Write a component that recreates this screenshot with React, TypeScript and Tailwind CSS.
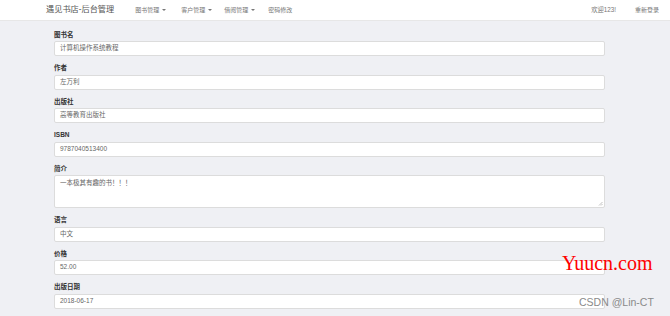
import React from "react";

interface Field {
  label: string;
  value: string;
  multiline?: boolean;
}

const fields: Field[] = [
  { label: "图书名", value: "计算机操作系统教程" },
  { label: "作者", value: "左万利" },
  { label: "出版社", value: "高等教育出版社" },
  { label: "ISBN", value: "9787040513400" },
  { label: "简介", value: "一本极其有趣的书！！！", multiline: true },
  { label: "语言", value: "中文" },
  { label: "价格", value: "52.00" },
  { label: "出版日期", value: "2018-06-17" },
];

const font = "font-['Liberation_Sans','Noto_Sans_CJK_SC',sans-serif]";

const Caret = () => (
  <span className="ml-[3px] inline-block h-0 w-0 border-x-[2px] border-t-[2px] border-x-transparent border-t-[#777] align-middle" />
);

const Navbar: React.FC = () => {
  return (
    <div className="flex h-[21px] items-center border-b border-[#e7e7e7] bg-white text-[#777]">
      <span className="ml-[46px] text-[8.2px] leading-none text-[#555]">遇见书店-后台管理</span>
      <div className="ml-[21px] flex items-center text-[6px] leading-none">
        <span className="flex items-center">
          图书管理
          <Caret />
        </span>
        <span className="ml-[15px] flex items-center">
          客户管理
          <Caret />
        </span>
        <span className="ml-[12px] flex items-center">
          借阅管理
          <Caret />
        </span>
        <span className="ml-[13px]">密码修改</span>
      </div>
      <div className="ml-auto mr-[11px] flex items-center text-[6px] leading-none">
        <span className="text-[6.3px]">欢迎123!</span>
        <span className="ml-[19px]">重新登录</span>
      </div>
    </div>
  );
};

export default function App() {
  return (
    <div className={`relative h-[316px] w-[670px] overflow-hidden bg-[#eff0f4] ${font}`}>
      <Navbar />
      <div className="pl-[54px] pr-[65px] pt-[8.5px]">
        {fields.map((f) => (
          <div key={f.label} className="mb-[7px]">
            <div className="mb-[2.5px] h-[9px] text-[6.5px] font-bold leading-[9px] text-[#333]">
              {f.label}
            </div>
            {f.multiline ? (
              <div className="relative h-[33px] rounded-[2px] border border-[#dcdcdc] bg-white px-[5px] pt-[2px] text-[6.5px] leading-[9px] text-[#666]">
                {f.value}
                <svg className="absolute bottom-[1px] right-[1px]" width="5" height="5" viewBox="0 0 5 5">
                  <path d="M1 4.5L4.5 1M3 4.5L4.5 3" stroke="#999" strokeWidth="0.6" />
                </svg>
              </div>
            ) : (
              <div className="flex h-[15px] items-center rounded-[2px] border border-[#dcdcdc] bg-white px-[5px] text-[6.5px] leading-none text-[#666]">
                {f.value}
              </div>
            )}
          </div>
        ))}
      </div>
      <div className="absolute left-[562px] top-[250px] font-['Liberation_Serif',serif] text-[20px] leading-[26px] text-[#ff0000]">
        Yuucn.com
      </div>
      <div className="absolute left-[579px] top-[295px] text-[10.5px] leading-[14px] text-[#8a8a8a]">
        CSDN @Lin-CT
      </div>
    </div>
  );
}
